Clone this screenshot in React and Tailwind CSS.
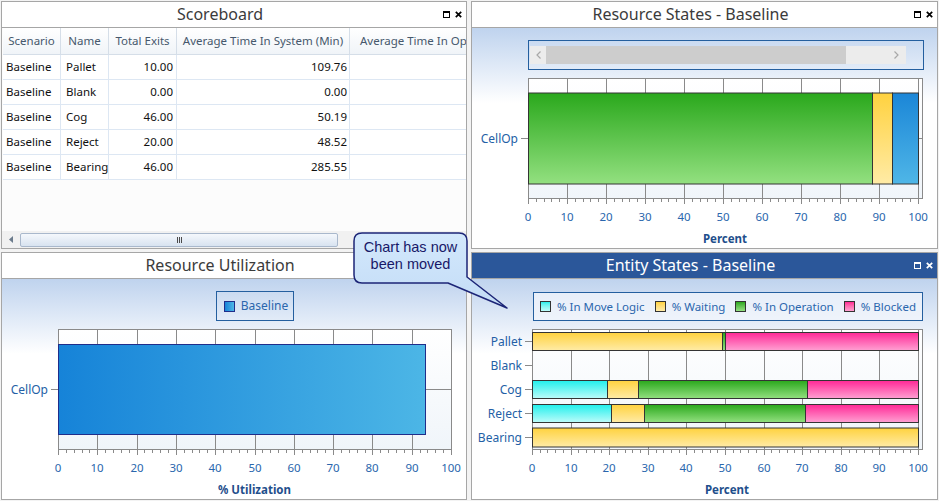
import React from 'react';

const SANS = "font-['Noto_Sans','Open_Sans',sans-serif]";

const GRADS = {
  green: ['#2aa81c', '#93e080'],
  yellow: ['#ffd23f', '#ffeba6'],
  blue: ['#1b86d7', '#4fb6e7'],
  pink: ['#ff2896', '#ffa0d2'],
  cyan: ['#20efec', '#bdfcfa'],
};

const WinButtons = ({ color }) => (
  <div className="flex w-[28px] items-center justify-end gap-[5px] pr-[4px]">
    <svg width="7" height="7" viewBox="0 0 7 7">
      <rect x="0.5" y="0.5" width="6" height="6" fill="none" stroke={color} />
      <rect x="0" y="0" width="7" height="2" fill={color} />
    </svg>
    <svg width="7" height="7" viewBox="0 0 7 7">
      <path d="M0.8 0.8L6.2 6.2M6.2 0.8L0.8 6.2" stroke={color} strokeWidth="1.7" />
    </svg>
  </div>
);

const TitleBar = ({ title, active }) => (
  <div
    className={
      active
        ? 'flex h-[26px] items-center border-b border-[#a6a6a6] bg-[#2b579a]'
        : 'flex h-[26px] items-center border-b border-[#a6a6a6] bg-white'
    }
  >
    <div
      className={
        'flex-1 text-center text-[16px] leading-[25px] ' +
        SANS +
        (active ? ' text-white' : ' text-[#3b3b3b]')
      }
    >
      {title}
    </div>
    <WinButtons color={active ? '#ffffff' : '#000000'} />
  </div>
);

// horizontal bar plot, drawn in svg (chart = drawing)
const Plot = ({ id, width, x0, x100, right, cats, centerLine, barStroke = '#343434' }) => {
  const top = 8;
  const bottom = 128;
  const px = (v) => Math.round(x0 + ((x100 - x0) * v) / 100);
  const minor = [];
  for (let v = 0; v <= 100; v += 2) minor.push(v);
  const major = [0, 10, 20, 30, 40, 50, 60, 70, 80, 90, 100];

  return (
    <svg width={width} height="160" className={'block ' + SANS}>
      <defs>
        {Object.entries(GRADS).map(([k, [a, b]]) => (
          <linearGradient key={k} id={`${id}-${k}`} x1="0" y1="0" x2="0" y2="1">
            <stop offset="0" stopColor={a} />
            <stop offset="1" stopColor={b} />
          </linearGradient>
        ))}
        <linearGradient id={`${id}-hblue`} x1="0" y1="0" x2="1" y2="0">
          <stop offset="0" stopColor="#1683d8" />
          <stop offset="1" stopColor="#4cb6e6" />
        </linearGradient>
        <linearGradient id={`${id}-plot`} x1="0" y1="0" x2="0" y2="1">
          <stop offset="0" stopColor="#ffffff" />
          <stop offset="1" stopColor="#f0f5fa" />
        </linearGradient>
      </defs>

      <rect
        x={x0 + 0.5}
        y={top + 0.5}
        width={right - x0}
        height={bottom - top}
        fill={`url(#${id}-plot)`}
        stroke="#8a8a8a"
      />
      {major.slice(1).map((v) => (
        <line key={v} x1={px(v) + 0.5} x2={px(v) + 0.5} y1={top} y2={bottom} stroke="#8a8a8a" />
      ))}
      {centerLine &&
        cats.map((c) => (
          <line key={c.label} x1={x0} x2={right} y1={c.cy + 0.5} y2={c.cy + 0.5} stroke="#8a8a8a" />
        ))}

      {cats.map((c) =>
        c.segs.map(([from, to, fill], i) => (
          <rect
            key={c.label + i}
            x={px(from) + 0.5}
            y={c.cy - c.h / 2 + 0.5}
            width={px(to) - px(from)}
            height={c.h}
            fill={`url(#${id}-${fill})`}
            stroke={barStroke}
          />
        ))
      )}

      {minor.map((v) => (
        <line
          key={v}
          x1={px(v) + 0.5}
          x2={px(v) + 0.5}
          y1={bottom}
          y2={bottom + (v % 10 === 0 ? 6 : 4)}
          stroke="#8a8a8a"
        />
      ))}
      {major.map((v) => (
        <text key={v} x={px(v)} y={151} textAnchor="middle" fontSize="11.5" fill="#2a66ad">
          {v}
        </text>
      ))}

      {cats.map((c) => (
        <g key={c.label}>
          <line x1={x0 - 7} x2={x0} y1={c.cy + 0.5} y2={c.cy + 0.5} stroke="#8a8a8a" />
          <text x={x0 - 10} y={c.cy + 4.5} textAnchor="end" fontSize="12" fill="#235fa6">
            {c.label}
          </text>
        </g>
      ))}
    </svg>
  );
};

const Panel = ({ title, active, children }) => (
  <div className="flex flex-col overflow-hidden border border-[#a6a6a6] bg-white">
    <TitleBar title={title} active={active} />
    {children}
  </div>
);

const chartBody =
  'flex h-[220px] flex-col bg-linear-to-b from-[#bfd3ee] to-white to-[34%]';

const rows = [
  ['Baseline', 'Pallet', '10.00', '109.76'],
  ['Baseline', 'Blank', '0.00', '0.00'],
  ['Baseline', 'Cog', '46.00', '50.19'],
  ['Baseline', 'Reject', '20.00', '48.52'],
  ['Baseline', 'Bearing', '46.00', '285.55'],
];

const headCell =
  'flex items-center justify-center whitespace-nowrap border-r border-[#d5dee8] text-[11.5px] text-[#46586c]';
const cell = 'flex items-center whitespace-nowrap border-r border-[#dde7f3] text-[11.5px] text-[#111111]';

const Scoreboard = () => (
  <div className="flex h-[220px] flex-col bg-[#fcfcfc]">
    <div className={'flex-1 overflow-hidden ' + SANS}>
      <div className="ml-px flex">
        <div className="h-[152px] w-[2px] bg-[#a3a3a3]" />
        <div className="w-max">
          <div className="grid h-[27px] grid-cols-[58px_48px_68px_173px_200px] border-b border-[#d5dee8] bg-linear-to-b from-white to-[#f0f4f8]">
            <div className={headCell}>Scenario</div>
            <div className={headCell}>Name</div>
            <div className={headCell}>Total Exits</div>
            <div className={headCell}>Average Time In System (Min)</div>
            <div className={headCell + ' justify-start pl-[10px]'}>Average Time In Operation (Min)</div>
          </div>
          {rows.map((r) => (
            <div
              key={r[1]}
              className="grid h-[25px] grid-cols-[58px_48px_68px_173px_200px] border-b border-[#dde7f3] bg-white"
            >
              <div className={cell + ' pl-[3px]'}>{r[0]}</div>
              <div className={cell + ' pl-[5px]'}>{r[1]}</div>
              <div className={cell + ' justify-end pr-[3px]'}>{r[2]}</div>
              <div className={cell + ' justify-end pr-[2px]'}>{r[3]}</div>
              <div className={cell} />
            </div>
          ))}
        </div>
      </div>
    </div>
    <div className="flex h-[17px] items-center bg-[#f1f1f1]">
      <svg width="4" height="7" viewBox="0 0 4 7" className="ml-[7px]">
        <path d="M4 0L0 3.5L4 7Z" fill="#6b7b8c" />
      </svg>
      <div className="ml-[7px] flex h-[14px] w-[318px] items-center justify-center rounded-[2px] border border-[#a9b8cc] bg-linear-to-b from-[#f5f8fc] to-[#d8e3f0]">
        <div className="flex gap-[1px]">
          <div className="h-[6px] w-px bg-[#4b4b4b]" />
          <div className="h-[6px] w-px bg-[#4b4b4b]" />
          <div className="h-[6px] w-px bg-[#4b4b4b]" />
        </div>
      </div>
    </div>
  </div>
);

const Chevron = ({ dir }) => (
  <svg width="5" height="8" viewBox="0 0 5 8">
    <path d={dir === 'l' ? 'M4.5 0.5L1 4L4.5 7.5' : 'M0.5 0.5L4 4L0.5 7.5'} fill="none" stroke="#a8a8a8" strokeWidth="1.2" />
  </svg>
);

const ResourceStates = () => (
  <div className={chartBody}>
    <div className="mt-[12px] h-[30px]">
      <div className="ml-[56px] flex h-[30px] w-[396px] border border-[#245f9f]">
        <div className="my-[5px] ml-px mr-[17px] flex flex-1 items-center bg-[#ececec]">
          <div className="flex w-[16px] justify-center">
            <Chevron dir="l" />
          </div>
          <div className="h-full w-[300px] bg-[#cdcdcd]" />
          <div className="flex-1" />
          <div className="mr-[7px] flex w-[6px] justify-center">
            <Chevron dir="r" />
          </div>
        </div>
      </div>
    </div>
    <Plot
      id="rs"
      width={465}
      x0={56}
      x100={446}
      right={450}
      centerLine
      cats={[
        {
          label: 'CellOp',
          cy: 68,
          h: 91,
          segs: [
            [0, 88.2, 'green'],
            [88.2, 93.3, 'yellow'],
            [93.3, 100, 'blue'],
          ],
        },
      ]}
    />
    <div className={'ml-[56px] w-[394px] text-center text-[11.5px] font-bold leading-[18px] text-[#1f4f8c] ' + SANS}>
      Percent
    </div>
  </div>
);

const ResourceUtil = () => (
  <div className={chartBody}>
    <div className="mt-[12px] flex h-[30px] w-[450px] justify-center pl-[56px]">
      <div className={'flex h-[30px] items-center gap-[6px] border border-[#245f9f] pl-[7px] pr-[5px] ' + SANS}>
        <div className="h-[11px] w-[11px] border border-[#1f2d8a] bg-linear-to-r from-[#1683d8] to-[#4cb6e6]" />
        <span className="text-[12px] text-[#2a66ad]">Baseline</span>
      </div>
    </div>
    <Plot
      id="ru"
      width={464}
      x0={56}
      x100={449}
      right={449}
      centerLine
      barStroke="#1f2d8a"
      cats={[{ label: 'CellOp', cy: 68, h: 90, segs: [[0, 93.4, 'hblue']] }]}
    />
    <div className={'ml-[56px] w-[393px] text-center text-[11.5px] font-bold leading-[18px] text-[#1f4f8c] ' + SANS}>
      % Utilization
    </div>
  </div>
);

const legendItems = [
  ['% In Move Logic', 'from-[#20efec] to-[#bdfcfa]'],
  ['% Waiting', 'from-[#ffd23f] to-[#ffeba6]'],
  ['% In Operation', 'from-[#2aa81c] to-[#93e080]'],
  ['% Blocked', 'from-[#ff2896] to-[#ffa0d2]'],
];

const EntityStates = () => (
  <div className={chartBody}>
    <div className="mt-[12px] h-[30px]">
      <div
        className={
          'ml-[61px] mt-px flex h-[29px] w-[390px] items-center justify-between border border-[#245f9f] bg-[#f3f7fc]/70 px-[6px] ' +
          SANS
        }
      >
        {legendItems.map(([t, g]) => (
          <div key={t} className="flex items-center gap-[6px]">
            <div className={'h-[11px] w-[11px] border border-[#333333] bg-linear-to-b ' + g} />
            <span className="text-[11.5px] text-[#2a66ad]">{t}</span>
          </div>
        ))}
      </div>
    </div>
    <Plot
      id="es"
      width={465}
      x0={60}
      x100={446}
      right={450}
      cats={[
        {
          label: 'Pallet',
          cy: 20,
          h: 18,
          segs: [
            [0, 49.2, 'yellow'],
            [49.2, 50, 'green'],
            [50, 100, 'pink'],
          ],
        },
        { label: 'Blank', cy: 44, h: 18, segs: [] },
        {
          label: 'Cog',
          cy: 68,
          h: 18,
          segs: [
            [0, 19.4, 'cyan'],
            [19.4, 27.5, 'yellow'],
            [27.5, 71.2, 'green'],
            [71.2, 100, 'pink'],
          ],
        },
        {
          label: 'Reject',
          cy: 92,
          h: 18,
          segs: [
            [0, 20.5, 'cyan'],
            [20.5, 29, 'yellow'],
            [29, 70.7, 'green'],
            [70.7, 100, 'pink'],
          ],
        },
        { label: 'Bearing', cy: 116, h: 19, segs: [[0, 100, 'yellow']] },
      ]}
    />
    <div className={'ml-[60px] w-[390px] text-center text-[11.5px] font-bold leading-[18px] text-[#1f4f8c] ' + SANS}>
      Percent
    </div>
  </div>
);

export default function App() {
  return (
    <div className="relative h-[501px] w-[939px] overflow-hidden bg-[#f3f3f3]">
      <div className="grid grid-cols-[466px_467px] grid-rows-[248px_248px] gap-x-[4px] gap-y-[3px] pl-px pt-px">
        <Panel title="Scoreboard">
          <Scoreboard />
        </Panel>
        <Panel title="Resource States - Baseline">
          <ResourceStates />
        </Panel>
        <Panel title="Resource Utilization">
          <ResourceUtil />
        </Panel>
        <Panel title="Entity States - Baseline" active>
          <EntityStates />
        </Panel>
      </div>

      {/* callout */}
      <svg className="pointer-events-none absolute left-[352px] top-[231px]" width="160" height="80" viewBox="0 0 160 80">
        <defs>
          <linearGradient id="callout" x1="0" y1="0" x2="0" y2="1">
            <stop offset="0" stopColor="#d3e8fc" />
            <stop offset="1" stopColor="#c3dcf6" />
          </linearGradient>
        </defs>
        <path
          d="M10 2H107Q115 2 115 10V46L155 77L96 52H10Q2 52 2 44V10Q2 2 10 2Z"
          fill="url(#callout)"
          stroke="#1c2577"
          strokeWidth="1.5"
          strokeLinejoin="round"
        />
      </svg>
      <div className="pointer-events-none absolute left-[354px] top-[233px] flex h-[50px] w-[113px] items-center justify-center pb-[4px] text-center font-['Liberation_Sans',Arial,sans-serif] text-[14.5px] leading-[17px] text-[#181868]">
        Chart has now
        <br />
        been moved
      </div>
    </div>
  );
}
